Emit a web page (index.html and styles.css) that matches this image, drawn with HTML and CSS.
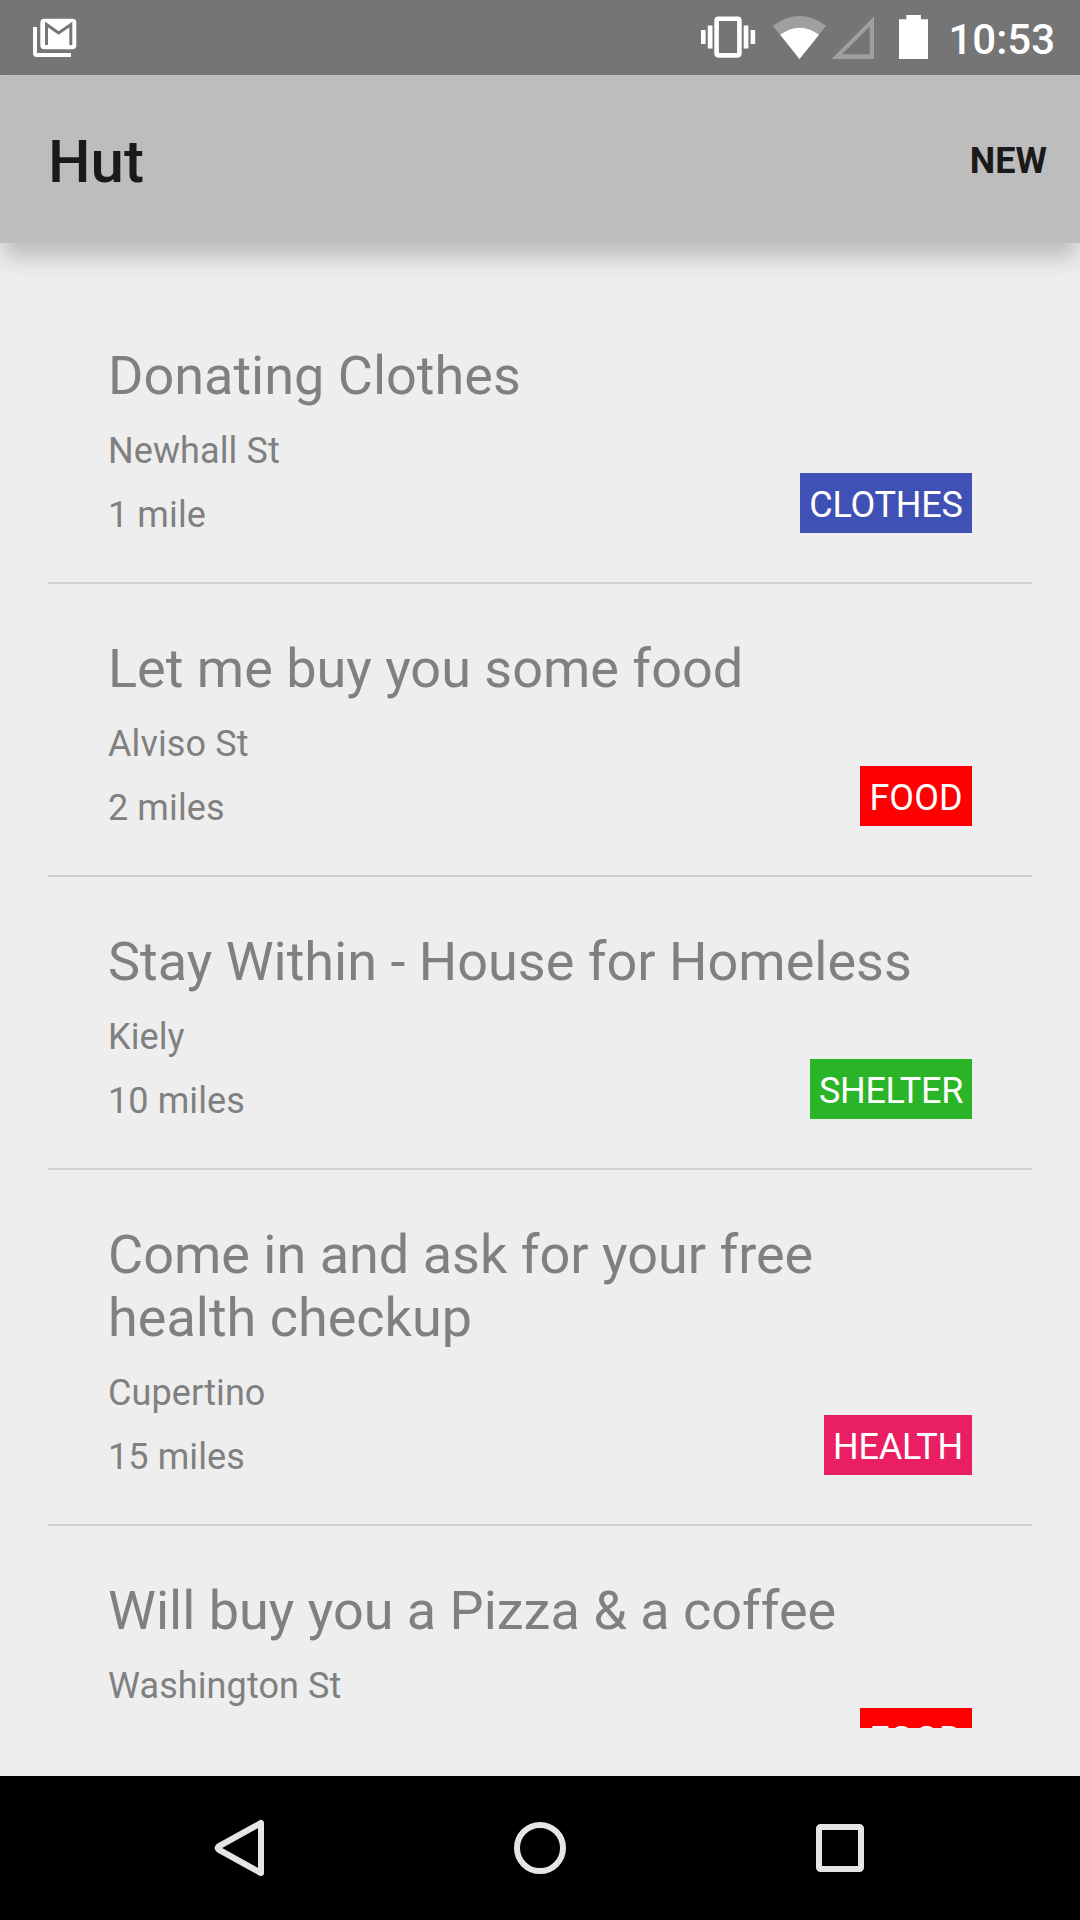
FILE: index.html
```html
<!DOCTYPE html>
<html lang="en">
<head>
    <meta charset="UTF-8">
    <meta name="viewport" content="width=device-width, initial-scale=1.0">
    <title>Hut</title>
    <link rel="stylesheet" href="styles.css">
</head>
<body>
    <!-- Status Bar -->
    <div class="status-bar">
        <svg class="status-mail" width="46" height="75" viewBox="32 0 46 75">
            <path d="M33 27h4v26h34v4H37q-4 0-4-4z" fill="#fff"/>
            <rect x="40.3" y="18.7" width="36" height="30.5" rx="4" fill="#fff"/>
            <path d="M46.5 45V24.5L58.6 33L70.8 24.5V45" fill="none" stroke="#757575" stroke-width="3"/>
        </svg>
        <div class="status-right">
            <svg width="230" height="75" viewBox="700 0 230 75">
                <rect x="716.6" y="18.8" width="22.8" height="36.6" rx="1.8" fill="none" stroke="#fff" stroke-width="4.6"/>
                <path d="M701 30h4.6v14H701zM707.8 25.5h4.7v23h-4.7zM743.7 25.5h4.7v23h-4.7zM750.6 30h4.6v14h-4.6z" fill="#fff"/>
                <path d="M772.8 25.7Q799.5 6.5 826.2 25.7L799.5 59z" fill="#9f9f9f"/>
                <path d="M780.2 34.8Q799.5 20.5 819 34.8L799.5 59z" fill="#fff"/>
                <path d="M831.5 59L874 16.5V59zM842 54.3H869.7V26.5z" fill="#9f9f9f" fill-rule="evenodd"/>
                <path d="M906.3 15h14.6v4.2H928V59H899V19.2h7.3z" fill="#fff"/>
            </svg>
            <span class="clock">10:53</span>
        </div>
    </div>

    <!-- App Bar -->
    <header class="app-bar">
        <h1>Hut</h1>
        <span class="action">NEW</span>
    </header>

    <!-- Listings -->
    <main class="list">
        <div class="item">
            <h2>Donating Clothes</h2>
            <div class="details">
                <div class="info">
                    <p>Newhall St</p>
                    <p>1 mile</p>
                </div>
                <span class="tag clothes">CLOTHES</span>
            </div>
        </div>
        <div class="item">
            <h2>Let me buy you some food</h2>
            <div class="details">
                <div class="info">
                    <p>Alviso St</p>
                    <p>2 miles</p>
                </div>
                <span class="tag food">FOOD</span>
            </div>
        </div>
        <div class="item">
            <h2>Stay Within - House for Homeless</h2>
            <div class="details">
                <div class="info">
                    <p>Kiely</p>
                    <p>10 miles</p>
                </div>
                <span class="tag shelter">SHELTER</span>
            </div>
        </div>
        <div class="item">
            <h2>Come in and ask for your free health checkup</h2>
            <div class="details">
                <div class="info">
                    <p>Cupertino</p>
                    <p>15 miles</p>
                </div>
                <span class="tag health">HEALTH</span>
            </div>
        </div>
        <div class="item">
            <h2>Will buy you a Pizza &amp; a coffee</h2>
            <div class="details">
                <div class="info">
                    <p>Washington St</p>
                </div>
                <span class="tag food">FOOD</span>
            </div>
        </div>
    </main>

    <!-- Navigation Bar -->
    <nav class="nav-bar">
        <svg width="60" height="60" viewBox="210 1818 60 60">
            <path d="M261 1823V1873L218.5 1849.5Q217 1848 218.5 1846.5z" fill="none" stroke="#e5e5e5" stroke-width="6" stroke-linejoin="round"/>
        </svg>
        <svg width="60" height="60" viewBox="0 0 60 60">
            <circle cx="30" cy="30" r="23" fill="none" stroke="#e5e5e5" stroke-width="6"/>
        </svg>
        <svg width="60" height="60" viewBox="0 0 60 60">
            <rect x="9" y="9" width="42" height="42" rx="1.5" fill="none" stroke="#e5e5e5" stroke-width="6"/>
        </svg>
    </nav>
</body>
</html>
```

FILE: styles.css
```css
/* General Styles */
* {
    box-sizing: border-box;
    margin: 0;
    padding: 0;
}

body {
    width: 1080px;
    height: 1920px;
    display: flex;
    flex-direction: column;
    font-family: Roboto, sans-serif;
    background-color: #eeeeee;
    color: #808080;
    overflow: hidden;
}

svg {
    display: block;
}

/* Status Bar */
.status-bar {
    flex: none;
    height: 75px;
    display: flex;
    justify-content: space-between;
    padding: 0 25px 0 32px;
    background: #757575;
}

.status-right {
    display: flex;
    gap: 18px;
}

.clock {
    color: #ffffff;
    font-size: 42px;
    font-weight: 500;
    line-height: 80px;
}

/* App Bar */
.app-bar {
    flex: none;
    height: 168px;
    display: flex;
    justify-content: space-between;
    align-items: center;
    padding: 0 33px 0 48px;
    background: #bdbdbd;
    color: #1a1a1a;
    box-shadow: 0 17px 22px -3px rgba(0, 0, 0, 0.21);
}

.app-bar h1 {
    font-size: 60px;
    font-weight: 500;
    line-height: 70px;
    padding-top: 5px;
}

.action {
    font-size: 36px;
    font-weight: 700;
    line-height: 42px;
    padding-top: 4px;
}

/* List */
.list {
    flex: 1;
    margin: 48px;
    overflow: hidden;
}

.item {
    padding: 53px 60px 46px;
    border-bottom: 2px solid #d0d0d0;
}

.item h2 {
    font-size: 54px;
    font-weight: 400;
    line-height: 63px;
    margin-bottom: 23px;
}

.details {
    height: 106px;
    display: flex;
    justify-content: space-between;
}

.info p {
    font-size: 36px;
    line-height: 42px;
    letter-spacing: 0.1px;
    margin-bottom: 22px;
}

/* Category Tags */
.tag {
    height: 60px;
    margin-top: 43px;
    padding-top: 11px;
    color: #ffffff;
    font-size: 36px;
    line-height: 42px;
    text-align: center;
}

.clothes {
    width: 172px;
    background: #3f51b5;
    letter-spacing: -0.2px;
}

.food {
    width: 112px;
    background: #ff0000;
}

.shelter {
    width: 162px;
    background: #2ab427;
    letter-spacing: -0.3px;
}

.health {
    width: 148px;
    background: #e91e63;
    letter-spacing: -0.2px;
}

/* Navigation Bar */
.nav-bar {
    flex: none;
    height: 144px;
    display: flex;
    justify-content: space-between;
    align-items: center;
    padding: 0 210px;
    background: #000000;
}
```
